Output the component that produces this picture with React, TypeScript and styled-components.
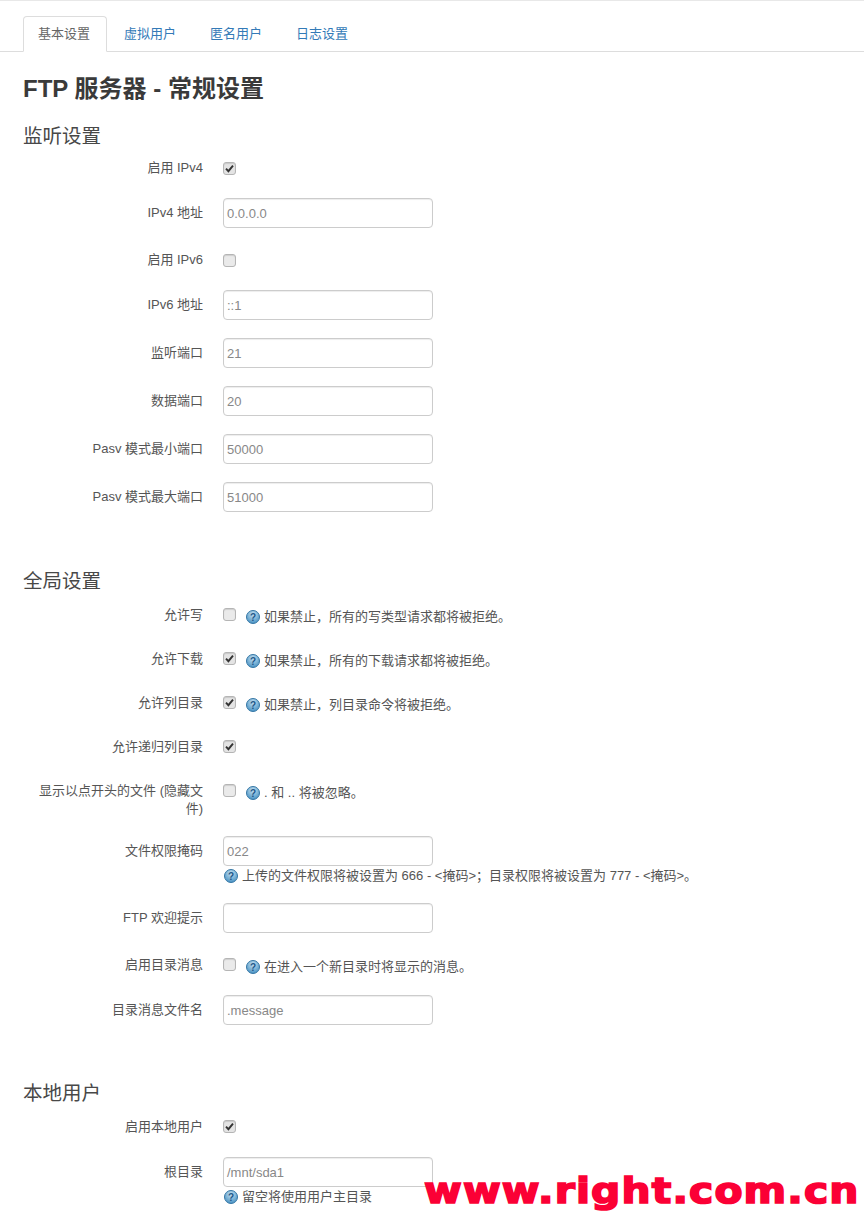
import styled, { createGlobalStyle } from "styled-components";

const CJK = `"Liberation Sans", "Noto Sans CJK SC", sans-serif`;

const GlobalStyle = createGlobalStyle`
  html, body {
    margin: 0;
    background: #fff;
  }
  * {
    box-sizing: border-box;
  }
`;

const Page = styled.div`
  position: relative;
  width: 864px;
  height: 1217px;
  overflow: hidden;
  padding-top: 16px;
  border-top: 1px solid #e8e8e8;
  font-family: ${CJK};
  font-size: 13px;
  color: #555;
`;

const TabBar = styled.ul`
  display: flex;
  gap: 2px;
  height: 36px;
  margin: -1px 0 0;
  padding: 0 0 0 23px;
  list-style: none;
  border-bottom: 1px solid #ddd;
`;

const Tab = styled.li<{ $active?: boolean }>`
  width: 84px;
  height: 36px;
  padding-right: 2px;
  line-height: 34px;
  text-align: center;
  color: ${p => (p.$active ? "#666" : "#337ab7")};
  background: ${p => (p.$active ? "#fff" : "transparent")};
  border: 1px solid ${p => (p.$active ? "#ddd" : "transparent")};
  border-bottom-color: ${p => (p.$active ? "#fff" : "transparent")};
  border-radius: 4px 4px 0 0;
`;

const Content = styled.div`
  padding: 0 23px;
`;

const Title = styled.h2`
  margin: 22px 0 0;
  height: 29px;
  line-height: 29px;
  font-size: 24px;
  font-weight: 700;
  color: #3a3a3a;
`;

const SectionTitle = styled.h3<{ $top: number; $bottom: number }>`
  margin: ${p => p.$top}px 0 ${p => p.$bottom}px;
  height: 22px;
  line-height: 22px;
  font-size: 19.5px;
  font-weight: 400;
  color: #484848;
`;

const Row = styled.div`
  display: flex;
  gap: 20px;
  margin-bottom: 18px;
`;

const Label = styled.label<{ $input?: boolean }>`
  flex: none;
  width: 180px;
  padding: ${p => (p.$input ? "6px" : "5px")} 0 0;
  line-height: 18px;
  text-align: right;
`;

const Control = styled.div`
  min-width: 0;
  flex: 1;
`;

const CheckLine = styled.div`
  display: flex;
  align-items: flex-start;
  gap: 10px;
  min-height: 26px;
`;

const Box = styled.span<{ $checked?: boolean }>`
  flex: none;
  display: flex;
  align-items: center;
  justify-content: center;
  width: 13px;
  height: 13px;
  margin-top: 7px;
  border: 1px solid #b5b5b5;
  border-radius: 3px;
  background: ${p => (p.$checked ? "#e4e4e4" : "#eaeaea")};
  box-shadow: inset 0 1px 1px rgba(0, 0, 0, 0.12);
`;

const ListenGroup = styled.div`
  ${Box} {
    margin-top: 8px;
  }
`;

const Input = styled.div`
  width: 210px;
  height: 30px;
  padding: 0 3px;
  line-height: 30px;
  color: #888;
  border: 1px solid #ccc;
  border-radius: 4px;
  background: #fff;
  box-shadow: inset 0 1px 1px rgba(0, 0, 0, 0.075);
  font-size: 13px;
`;

const Help = styled.div`
  display: flex;
  align-items: center;
  gap: 4px;
  height: 19px;
  padding-left: 1px;
  line-height: 19px;
`;

const HelpInline = styled.div`
  display: flex;
  align-items: center;
  gap: 4px;
  margin-top: 6px;
  height: 20px;
  line-height: 20px;
`;

const Watermark = styled.div`
  position: absolute;
  left: 424px;
  top: 1165px;
  font-family: "DejaVu Sans", sans-serif;
  font-weight: 700;
  font-size: 36px;
  line-height: 50px;
  color: #fb0035;
  white-space: nowrap;
  -webkit-text-stroke: 1.7px #fb0035;
  letter-spacing: 1px;
  transform: scaleX(1.135);
  transform-origin: left center;
`;

const HelpIcon = () => (
  <svg width="14" height="14" viewBox="0 0 14 14" style={{ flex: "none" }}>
    <defs>
      <radialGradient id="help-fill" cx="50%" cy="30%" r="75%">
        <stop offset="0%" stopColor="#c4e0f0" />
        <stop offset="100%" stopColor="#3f8cc0" />
      </radialGradient>
    </defs>
    <circle cx="7" cy="7" r="6.5" fill="url(#help-fill)" stroke="#3577a5" strokeWidth="1" />
    <text x="7" y="10.5" textAnchor="middle" fontSize="10" fontWeight="700" fontFamily="Liberation Sans, sans-serif" fill="#1d5688">?</text>
  </svg>
);

const Check = () => (
  <svg width="9" height="9" viewBox="0 0 9 9">
    <path d="M1 4.6 L3.4 7.2 L8 1.6" fill="none" stroke="#333" strokeWidth="1.9" />
  </svg>
);

type Field = {
  label: string;
  check?: boolean;
  checked?: boolean;
  value?: string;
  help?: string;
};

const listen: Field[] = [
  { label: "启用 IPv4", check: true, checked: true },
  { label: "IPv4 地址", value: "0.0.0.0" },
  { label: "启用 IPv6", check: true },
  { label: "IPv6 地址", value: "::1" },
  { label: "监听端口", value: "21" },
  { label: "数据端口", value: "20" },
  { label: "Pasv 模式最小端口", value: "50000" },
  { label: "Pasv 模式最大端口", value: "51000" },
];

const global: Field[] = [
  { label: "允许写", check: true, help: "如果禁止，所有的写类型请求都将被拒绝。" },
  { label: "允许下载", check: true, checked: true, help: "如果禁止，所有的下载请求都将被拒绝。" },
  { label: "允许列目录", check: true, checked: true, help: "如果禁止，列目录命令将被拒绝。" },
  { label: "允许递归列目录", check: true, checked: true },
  { label: "显示以点开头的文件 (隐藏文件)", check: true, help: ". 和 .. 将被忽略。" },
  { label: "文件权限掩码", value: "022", help: "上传的文件权限将被设置为 666 - <掩码>；目录权限将被设置为 777 - <掩码>。" },
  { label: "FTP 欢迎提示", value: "" },
  { label: "启用目录消息", check: true, help: "在进入一个新目录时将显示的消息。" },
  { label: "目录消息文件名", value: ".message" },
];

const local: Field[] = [
  { label: "启用本地用户", check: true, checked: true },
  { label: "根目录", value: "/mnt/sda1", help: "留空将使用用户主目录" },
];

const FieldRow = ({ field }: { field: Field }) => (
  <Row>
    <Label $input={!field.check}>{field.label}</Label>
    <Control>
      {field.check ? (
        <CheckLine>
          <Box $checked={field.checked}>{field.checked && <Check />}</Box>
          {field.help && (
            <HelpInline>
              <HelpIcon />
              <span>{field.help}</span>
            </HelpInline>
          )}
        </CheckLine>
      ) : (
        <>
          <Input>{field.value}</Input>
          {field.help && (
            <Help>
              <HelpIcon />
              <span>{field.help}</span>
            </Help>
          )}
        </>
      )}
    </Control>
  </Row>
);

export default function App() {
  return (
    <Page>
      <GlobalStyle />
      <TabBar>
        <Tab $active>基本设置</Tab>
        <Tab>虚拟用户</Tab>
        <Tab>匿名用户</Tab>
        <Tab>日志设置</Tab>
      </TabBar>
      <Content>
        <Title>FTP 服务器 - 常规设置</Title>
        <SectionTitle $top={22} $bottom={7}>监听设置</SectionTitle>
        <ListenGroup>
          {listen.map(f => <FieldRow key={f.label} field={f} />)}
        </ListenGroup>
        <SectionTitle $top={58} $bottom={9}>全局设置</SectionTitle>
        {global.map(f => <FieldRow key={f.label} field={f} />)}
        <SectionTitle $top={57} $bottom={9}>本地用户</SectionTitle>
        {local.map(f => <FieldRow key={f.label} field={f} />)}
      </Content>
      <Watermark>www.right.com.cn</Watermark>
    </Page>
  );
}
